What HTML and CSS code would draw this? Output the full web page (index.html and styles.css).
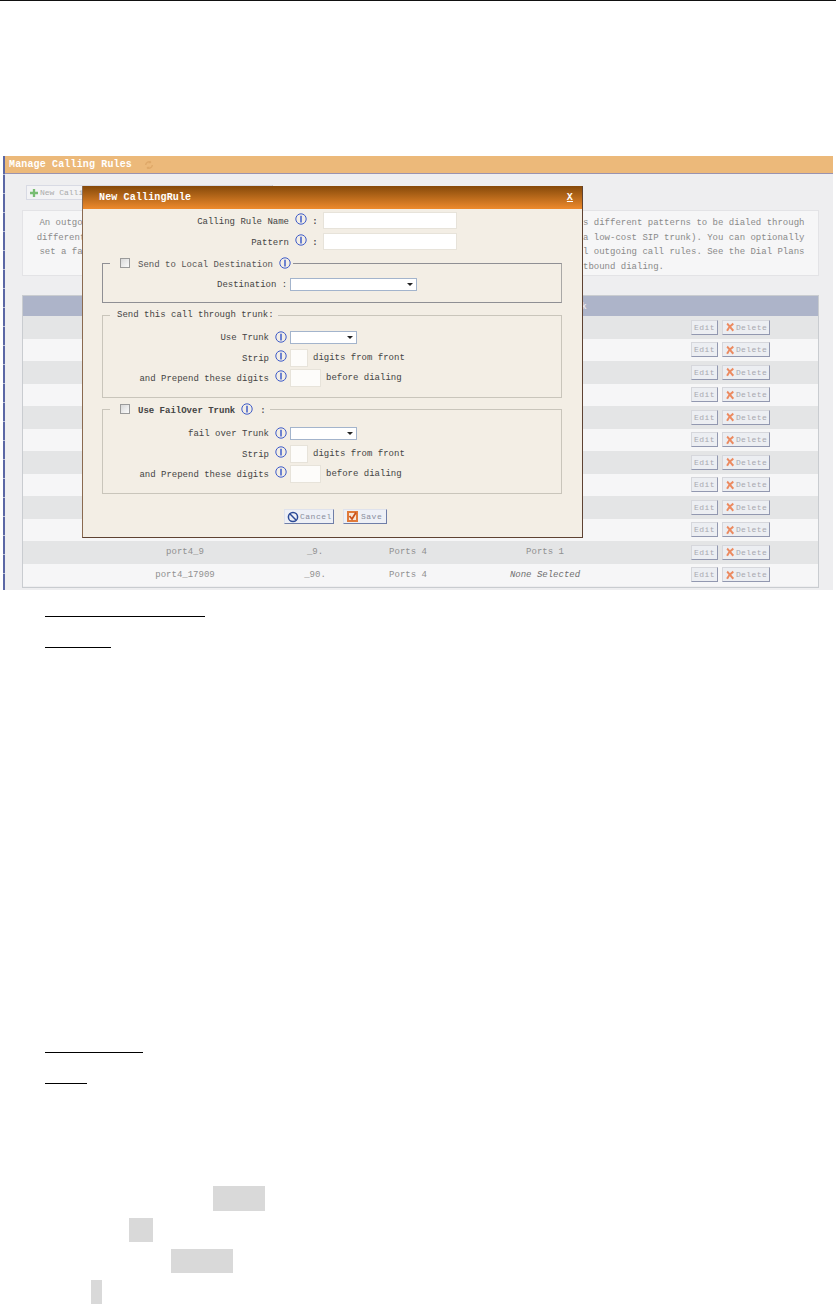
FILE: index.html
```html
<!DOCTYPE html>
<html>
<head>
    <title>Manage Calling Rules</title>
    <link rel="stylesheet" href="styles.css">
</head>
<body>
    <svg class="defs" width="0" height="0">
        <symbol id="info" viewBox="0 0 12 12">
            <circle cx="6" cy="6" r="5.2" fill="none" stroke="#3f5cc9" stroke-width="1"/>
            <path d="M6 2.800v6.600" fill="none" stroke="#3f5cc9" stroke-width="1.500"/>
        </symbol>
        <symbol id="cross" viewBox="0 0 12 12">
            <path d="M2.500 2c2 1.500 4 5 7.500 8.500M10 2C7 4 4 7 2.500 10.500" fill="none" stroke="#ec8a60" stroke-width="2.400"/>
        </symbol>
    </svg>

    <div class="top-rule"></div>

    <div class="panel">
        <div class="panel-edge"></div>
        <div class="panel-main">
            <div class="panel-title">
                <span>Manage Calling Rules</span>
                <svg class="refresh" width="10" height="10" viewBox="0 0 12 12">
                    <path d="M2 6a4 4 0 0 1 6.500-3M10 6a4 4 0 0 1-6.500 3" fill="none" stroke="#dfa868" stroke-width="1.600"/>
                    <path d="M8 .8v3h-3zM4 11.200v-3h3z" fill="#dfa868"/>
                </svg>
            </div>

            <div class="new-btn">
                <svg width="8" height="8" viewBox="0 0 9 9"><path d="M3.200 0h2.600v3.200H9v2.600H5.800V9H3.200V5.800H0V3.200h3.200z" fill="#78bd72"/></svg>
                <span>New Calli</span>
            </div>

            <div class="info-box">
                <div class="info-left">An outgo<br>different<br>set a fa</div>
                <div class="info-right">s different patterns to be dialed through<br>a low-cost SIP trunk). You can optionally<br>l outgoing call rules. See the Dial Plans<br>tbound dialing.</div>
            </div>

            <div class="rules">
                <div class="rules-head"><span>Failover Trunk</span></div>
                <div class="rule"><div class="actions"><button class="btn">Edit</button><button class="btn btn-del"><svg><use href="#cross"/></svg>Delete</button></div></div>
                <div class="rule"><div class="actions"><button class="btn">Edit</button><button class="btn btn-del"><svg><use href="#cross"/></svg>Delete</button></div></div>
                <div class="rule"><div class="actions"><button class="btn">Edit</button><button class="btn btn-del"><svg><use href="#cross"/></svg>Delete</button></div></div>
                <div class="rule"><div class="actions"><button class="btn">Edit</button><button class="btn btn-del"><svg><use href="#cross"/></svg>Delete</button></div></div>
                <div class="rule"><div class="actions"><button class="btn">Edit</button><button class="btn btn-del"><svg><use href="#cross"/></svg>Delete</button></div></div>
                <div class="rule"><div class="actions"><button class="btn">Edit</button><button class="btn btn-del"><svg><use href="#cross"/></svg>Delete</button></div></div>
                <div class="rule"><div class="actions"><button class="btn">Edit</button><button class="btn btn-del"><svg><use href="#cross"/></svg>Delete</button></div></div>
                <div class="rule"><div class="actions"><button class="btn">Edit</button><button class="btn btn-del"><svg><use href="#cross"/></svg>Delete</button></div></div>
                <div class="rule"><div class="actions"><button class="btn">Edit</button><button class="btn btn-del"><svg><use href="#cross"/></svg>Delete</button></div></div>
                <div class="rule"><div class="actions"><button class="btn">Edit</button><button class="btn btn-del"><svg><use href="#cross"/></svg>Delete</button></div></div>
                <div class="rule">
                    <span>port4_9</span><span>_9.</span><span>Ports 4</span><span>Ports 1</span>
                    <div class="actions"><button class="btn">Edit</button><button class="btn btn-del"><svg><use href="#cross"/></svg>Delete</button></div>
                </div>
                <div class="rule">
                    <span>port4_17909</span><span>_90.</span><span>Ports 4</span><em>None Selected</em>
                    <div class="actions"><button class="btn">Edit</button><button class="btn btn-del"><svg><use href="#cross"/></svg>Delete</button></div>
                </div>
            </div>
        </div>

        <div class="dialog">
            <div class="dialog-title"><span>New CallingRule</span><span class="dialog-close">X</span></div>

            <div class="top-row">
                <label class="top-label">Calling Rule Name</label>
                <svg class="info"><use href="#info"/></svg>
                <span class="colon">:</span>
                <input class="field field-wide" type="text">
            </div>
            <div class="top-row">
                <label class="top-label">Pattern</label>
                <svg class="info"><use href="#info"/></svg>
                <span class="colon">:</span>
                <input class="field field-wide" type="text">
            </div>

            <fieldset class="group group-dark group-first">
                <legend class="legend-check">
                    <span class="check"></span>
                    <span class="legend-label">Send to Local Destination</span>
                    <svg class="info"><use href="#info"/></svg>
                </legend>
                <div class="dest-row">
                    <label>Destination :</label>
                    <div class="select select-wide"></div>
                </div>
            </fieldset>

            <fieldset class="group group-second">
                <legend class="legend-text">Send this call through trunk:</legend>
                <div class="form-row">
                    <label>Use Trunk</label>
                    <svg class="info"><use href="#info"/></svg>
                    <div class="select"></div>
                </div>
                <div class="form-row form-row-input">
                    <label>Strip</label>
                    <svg class="info"><use href="#info"/></svg>
                    <input class="field field-small" type="text">
                    <span>digits from front</span>
                </div>
                <div class="form-row form-row-last">
                    <label>and Prepend these digits</label>
                    <svg class="info"><use href="#info"/></svg>
                    <input class="field field-mid" type="text">
                    <span>before dialing</span>
                </div>
            </fieldset>

            <fieldset class="group group-third">
                <legend class="legend-check legend-fail">
                    <span class="check"></span>
                    <span class="legend-label strong">Use FailOver Trunk</span>
                    <svg class="info"><use href="#info"/></svg>
                    <span class="legend-colon">:</span>
                </legend>
                <div class="form-row">
                    <label>fail over Trunk</label>
                    <svg class="info"><use href="#info"/></svg>
                    <div class="select"></div>
                </div>
                <div class="form-row form-row-input">
                    <label>Strip</label>
                    <svg class="info"><use href="#info"/></svg>
                    <input class="field field-small" type="text">
                    <span>digits from front</span>
                </div>
                <div class="form-row form-row-last">
                    <label>and Prepend these digits</label>
                    <svg class="info"><use href="#info"/></svg>
                    <input class="field field-mid" type="text">
                    <span>before dialing</span>
                </div>
            </fieldset>

            <div class="dialog-buttons">
                <button class="dlg-btn dlg-cancel">
                    <svg width="12" height="12" viewBox="0 0 12 12"><circle cx="6" cy="6" r="4.600" fill="none" stroke="#2c4a96" stroke-width="1.500"/><path d="M2.800 2.800l6.400 6.400" stroke="#2c4a96" stroke-width="1.500"/></svg>
                    Cancel
                </button>
                <button class="dlg-btn dlg-save">
                    <svg width="11" height="11" viewBox="0 0 11 11"><rect width="11" height="11" fill="#e07a3a"/><rect x="2" y="2" width="7" height="7" fill="#f7e7d8"/><path d="M2.500 5l2.500 3 4-6.500" fill="none" stroke="#c9501a" stroke-width="1.800"/></svg>
                    Save
                </button>
            </div>
        </div>
    </div>

    <div class="doc-rule doc-rule-a"></div>
    <div class="doc-rule doc-rule-b"></div>
    <div class="doc-rule doc-rule-c"></div>
    <div class="doc-rule doc-rule-d"></div>

    <div class="mark mark-a"></div>
    <div class="mark mark-b"></div>
    <div class="mark mark-c"></div>
    <div class="mark mark-d"></div>
</body>
</html>
```

FILE: styles.css
```css
html, body {
    margin: 0;
    padding: 0;
    background: #fff;
}
body {
    font-family: "Liberation Mono", monospace;
    font-size: 9px;
    color: #555;
    height: 1304px;
    overflow: hidden;
}
.defs {
    position: absolute;
}
.top-rule {
    height: 1px;
    background: #111;
}

/* background panel */
.panel {
    position: relative;
    display: flex;
    margin: 155px 3px 0 3px;
    height: 434px;
}
.panel-edge {
    width: 2px;
    background: repeating-linear-gradient(#5b67a5 0, #5b67a5 18px, #b9bfd8 18px, #b9bfd8 19px);
}
.panel-main {
    flex: 1;
    background: #eeeef0;
}
.panel-title {
    display: flex;
    align-items: center;
    gap: 12px;
    height: 17px;
    padding-left: 4px;
    background: #ecb97a;
    border-bottom: 1px solid #9a93b0;
    color: #fff;
    font-size: 10px;
    font-weight: bold;
    letter-spacing: 0.15px;
}
.new-btn {
    display: flex;
    align-items: center;
    gap: 2px;
    width: 242px;
    height: 13px;
    margin: 11px 0 0 21px;
    padding-left: 3px;
    background: #f3f3f5;
    border: 1px solid #d8dae4;
    border-right-color: #b8bccc;
    color: #aaa;
    font-size: 8px;
    box-sizing: content-box;
}
.info-box {
    box-sizing: border-box;
    display: flex;
    width: 797px;
    height: 66px;
    margin: 10px 0 0 17px;
    padding: 5px 0 0;
    background: #f6f6f7;
    border: 1px solid #e3e3e6;
    color: #8a8a8a;
    line-height: 14.5px;
    white-space: nowrap;
}
.info-left {
    width: 76px;
    text-align: center;
}
.info-right {
    margin-left: 484px;
}

/* rules table */
.rules {
    box-sizing: border-box;
    width: 797px;
    height: 293px;
    margin: 19px 0 0 17px;
    border: 1px solid #c9ccd0;
}
.rules-head {
    height: 20px;
    padding-left: 488px;
    background: #adb4c9;
    color: #e8e9ef;
    font-weight: bold;
    line-height: 22px;
}
.rule {
    display: grid;
    grid-template-columns: 130px 130px 56px 218px 1fr;
    align-items: center;
    height: 22.5px;
    padding-left: 97px;
    background: #f6f6f7;
    color: #909090;
    text-align: center;
    white-space: nowrap;
}
.rule:nth-child(even) {
    background: #e4e5e6;
}
.rule em {
    color: #707070;
}
.actions {
    grid-column: 5;
    display: flex;
    gap: 4px;
    padding-left: 37px;
}
.btn {
    display: flex;
    align-items: center;
    justify-content: center;
    width: 27px;
    height: 15px;
    padding: 0;
    background: #eceef2;
    border: 1px solid #d6d7dc;
    border-right-color: #9298b0;
    border-bottom-color: #9298b0;
    color: #a8a8b0;
    font-family: "Liberation Mono", monospace;
    font-size: 8px;
    letter-spacing: 0.4px;
}
.btn-del {
    width: 48px;
    gap: 1px;
}
.btn-del svg {
    width: 10px;
    height: 10px;
}

/* dialog over the panel */
.dialog {
    position: absolute;
    top: 30px;
    left: 79px;
    box-sizing: border-box;
    width: 501px;
    height: 352px;
    background: #f3eee5;
    border-left: 1px solid #8a6a50;
    border-right: 1px solid #5e4232;
    border-bottom: 1px solid #5e4232;
    color: #444;
}
.dialog-title {
    display: flex;
    justify-content: space-between;
    align-items: center;
    height: 23px;
    padding: 0 9px 0 16px;
    background: linear-gradient(#85490a, #ee8a2c);
    color: #fff;
    font-size: 10px;
    font-weight: bold;
    letter-spacing: 0.15px;
}
.dialog-close {
    text-decoration: underline;
}
.top-row {
    display: flex;
    align-items: center;
    height: 17px;
    margin-top: 4px;
}
.dialog-title + .top-row {
    margin-top: 3px;
}
.top-label {
    width: 206px;
    padding-top: 2px;
    text-align: right;
}
.info {
    flex: none;
    width: 12px;
    height: 12px;
    margin-left: 6px;
}
.top-row .info {
    margin-bottom: 4px;
}
.colon {
    width: 16px;
    padding-top: 2px;
    font-weight: bold;
    text-align: center;
}
.field {
    box-sizing: border-box;
    margin: 0;
    padding: 0;
    background: #fdfcfa;
    border: 1px solid #e7e3da;
}
.field-wide {
    width: 134px;
    height: 17px;
    background: #fff;
}
.field-small {
    width: 18px;
    height: 18px;
}
.field-mid {
    width: 31px;
    height: 18px;
}

/* fieldsets */
.group {
    box-sizing: border-box;
    width: 460px;
    min-width: 0;
    margin: 0 0 0 19px;
    padding: 0 0 10px;
    border: 1px solid #c9c5bb;
}
.group-dark {
    border-color: #8f8f94;
    border-right-color: #a9a8a6;
}
.group-first {
    margin-top: 7px;
    padding-bottom: 11px;
}
.group-second {
    margin-top: 6px;
}
.group-third {
    margin-top: 5px;
}
.group legend {
    height: 12px;
    line-height: 12px;
    margin-left: 7px;
    padding: 0;
}
.legend-check {
    display: flex;
    align-items: center;
    padding: 0 2px 0 10px !important;
    color: #555;
}
.legend-text {
    padding: 0 4px 0 7px !important;
}
.legend-label {
    padding-top: 4px;
}
.check {
    box-sizing: border-box;
    width: 10px;
    height: 10px;
    margin-right: 8px;
    background: linear-gradient(135deg, #d8d8d8, #fbfbfb);
    border: 1px solid #9a9a9a;
}
.strong {
    font-weight: bold;
    color: #444;
}
.legend-colon {
    margin-left: 7px;
    padding-top: 4px;
    font-weight: bold;
}
.legend-fail {
    padding-right: 4px !important;
}
.dest-row {
    display: flex;
    align-items: center;
    height: 13px;
    padding: 9px 0 0 114px;
    gap: 3px;
}
.form-row {
    display: flex;
    align-items: center;
    height: 13px;
    padding-top: 10px;
}
.group-third .form-row:first-of-type {
    padding-top: 12px;
}
.form-row label {
    width: 166px;
    text-align: right;
    white-space: nowrap;
}
.form-row .info {
    margin-bottom: 2px;
}
.form-row-input .info,
.form-row-last .info {
    margin-bottom: 4px;
}
.form-row-input label,
.form-row-last label {
    padding-top: 2px;
}
.form-row .select,
.form-row .field {
    margin: 0 5px 0 3px;
}
.form-row-input {
    height: 18px;
    padding-top: 5px;
}
.form-row-last {
    height: 18px;
    padding-top: 2px;
}
.select {
    position: relative;
    box-sizing: border-box;
    width: 67px;
    height: 13px;
    background: #fff;
    border: 1px solid #a3b4cc;
}
.select-wide {
    width: 127px;
}
.select::after {
    content: "";
    position: absolute;
    right: 3px;
    top: 4px;
    border: 3px solid transparent;
    border-top: 3px solid #222;
}
.dialog-buttons {
    display: flex;
    gap: 9px;
    margin: 15px 0 0 201px;
}
.dlg-btn {
    display: flex;
    align-items: center;
    gap: 1px;
    box-sizing: border-box;
    height: 15px;
    padding: 0 0 0 2px;
    background: #eef0f6;
    border: 1px solid #dfe2ec;
    border-right-color: #6f7ea8;
    border-bottom-color: #6f7ea8;
    color: #8a8e9c;
    font-family: "Liberation Mono", monospace;
    font-size: 8px;
    letter-spacing: 0.5px;
}
.dlg-cancel {
    width: 50px;
}
.dlg-save {
    width: 44px;
    gap: 3px;
    padding-left: 3px;
}

/* page rules and marks left under the screenshot */
.doc-rule {
    height: 1px;
    margin-left: 45px;
    background: #000;
}
.doc-rule-a {
    width: 160px;
    margin-top: 26px;
}
.doc-rule-b {
    width: 66px;
    margin-top: 30px;
}
.doc-rule-c {
    width: 98px;
    margin-top: 404px;
}
.doc-rule-d {
    width: 42px;
    margin-top: 30px;
}
.mark {
    height: 24px;
    background: #d9d9d9;
}
.mark-a {
    width: 52px;
    height: 25px;
    margin: 102px 0 0 213px;
}
.mark-b {
    width: 24px;
    margin: 7px 0 0 129px;
}
.mark-c {
    width: 62px;
    margin: 7px 0 0 171px;
}
.mark-d {
    width: 11px;
    margin: 7px 0 0 91px;
}
```
